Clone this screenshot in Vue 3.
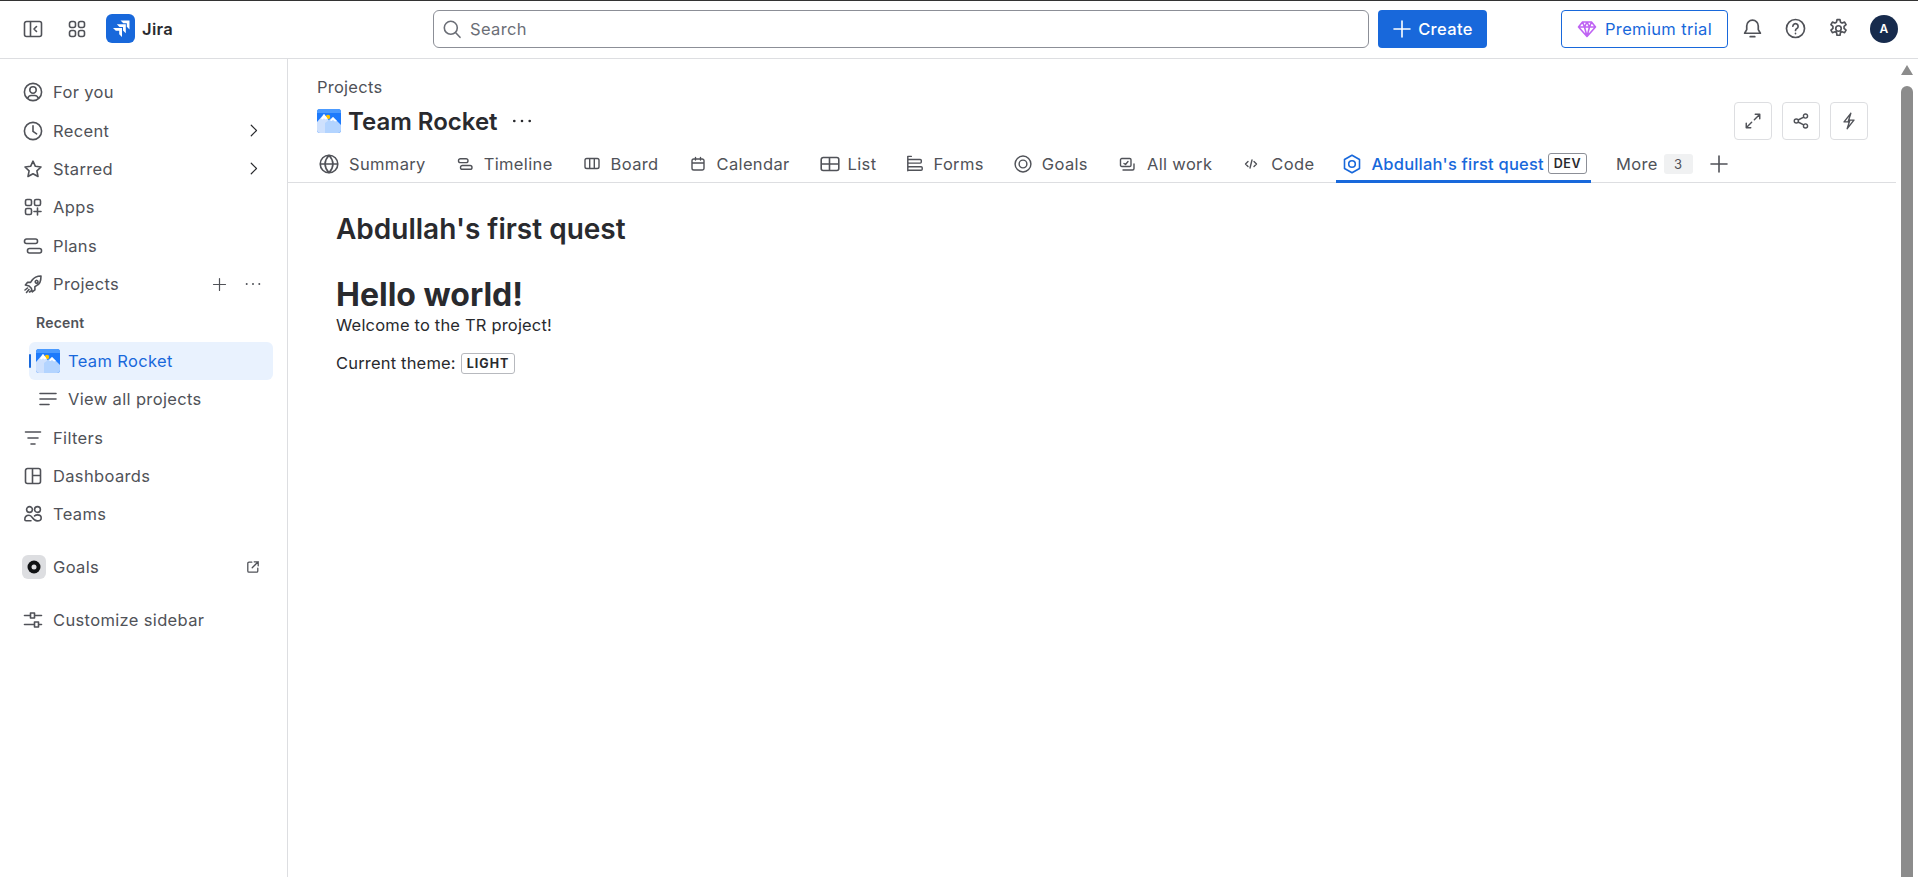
<script setup>
const r = (x, y, w, h, c = 1.5) =>
  `M${x + c} ${y}h${w - 2 * c}a${c} ${c} 0 0 1 ${c} ${c}v${h - 2 * c}a${c} ${c} 0 0 1-${c} ${c}h-${w - 2 * c}a${c} ${c} 0 0 1-${c}-${c}v-${h - 2 * c}a${c} ${c} 0 0 1 ${c}-${c}Z`
const ci = (x, y, q) => `M${x - q} ${y}a${q} ${q} 0 1 1 ${2 * q} 0a${q} ${q} 0 1 1-${2 * q} 0Z`

const icons = {
  foryou: ci(10, 10, 8.6) + ci(10, 8, 3.2) + 'M4.8 16.4c.4-1.9 1.7-2.9 3.4-2.9h3.6c1.7 0 3 1 3.4 2.9',
  recent: ci(10, 10, 8.6) + 'M10 4.8v5.6l3.6 2.4',
  star: 'M10 2.2l2.4 5.1 5.6.7-4.1 3.9 1.1 5.6-5-2.8-5 2.8 1.1-5.6L2 8l5.6-.7Z',
  apps: r(2.5, 2.5, 6, 6) + r(11.5, 2.5, 6, 6) + r(2.5, 11.5, 6, 6) + 'M14.5 11v7M11 14.5h7',
  plans: r(1.5, 3, 13, 4.5, 2) + r(4.5, 12.5, 14, 4.5, 2),
  rocket: 'M18 2c-4 .1-7 1.4-9 4.3L7.6 8.4H4.4L2.4 11l3.7 1 2.2 2.3 1 3.6 2.6-2v-3.2l2-1.4C16.800 10.200 18 6.500 18 2Z M12.200 7.800a1.400 1.400 0 1 0 0-.01Z M4.500 14l-2.500 2M6 15.500l-2.500 3M8 17l-1.500 1',
  filters: 'M2.500 4h15M5 10h10M8 16h4',
  dash: r(2.500, 2.500, 15, 15, 2) + 'M9.500 2.500v15M9.500 9.500h8',
  teams: ci(6.500, 5.500, 2.900) + ci(14.500, 5.500, 2.900) + 'M1.800 15.500c0-2.700 1.900-4.300 4.200-4.300 3.700 0 3.400 5.700 8.200 5.700 2.300 0 4-1.300 4-3 0-1.900-1.600-3-3.700-3-1.100 0-2.100.3-2.900 1M1.800 15.500c0 .9.400 1.300 1.200 1.300h5',
  custom: 'M1.500 5.500h6M12 5.500h6.500M7.500 3h4v5h-4ZM1.500 14.500h10M15.500 14.500h3M11.500 12h4v5h-4Z',
  external: 'M8.500 4H5a1.500 1.500 0 0 0-1.500 1.500V15A1.500 1.500 0 0 0 5 16.500h9.500A1.500 1.500 0 0 0 16 15v-3.500M9 11l7.500-7.500M11.500 3.500h5v5',
  allprojects: 'M2 4.500h16M2 10h16M2 15.500h9',
  sidebar: r(1.5, 2.5, 17, 15, 2) + 'M7.500 2.500v15M13.500 7.500 11 10l2.500 2.500',
  grid: r(2.500, 2.500, 6, 6, 2) + r(11.500, 2.500, 6, 6, 2) + r(2.500, 11.500, 6, 6, 2) + r(11.500, 11.500, 6, 6, 2),
  search: ci(8.800, 8.800, 6.500) + 'M13.500 13.500l4.500 4.800',
  chev: 'M7 3 14 10 7 17',
  plus: 'M10 2v16M2 10h16',
  dots: 'M3 10h.01M10 10h.01M17 10h.01',
  bell: 'M10 2a5.500 5.500 0 0 0-5.500 5.500V11L2.500 14.500h15L15.500 11V7.500A5.500 5.500 0 0 0 10 2ZM7.800 17.800h4.400',
  help: ci(10, 10, 8.600) + 'M7.500 7.800a2.500 2.500 0 1 1 3.800 2.200c-.9.500-1.300 1-1.300 1.900M10 14.500v.3',
  gear: ci(10, 10, 2.600) + 'M8.600 1.500h2.800l.5 2.500 1.500.8 2.400-.9 1.400 2.400-1.900 1.700v1.900l1.900 1.700-1.400 2.400-2.400-.9-1.500.8-.5 2.500H8.600l-.5-2.500-1.500-.8-2.400.9-1.400-2.400 1.900-1.700V8L2.800 6.300l1.400-2.400 2.400.9 1.500-.8Z',
  expand: 'M11.500 8.500 17.500 2.500M12.500 2.500h5v5M8.500 11.500l-6 6M2.500 12.500v5h5',
  share: ci(15, 4.500, 2.300) + ci(4.800, 10, 2.300) + ci(15, 15.500, 2.300) + 'M6.800 8.900l6.200-3.300M6.800 11.100l6.200 3.300',
  bolt: 'M12 1.500 4.500 11H9M8 18.500 15.500 9H11M12 1.500 9 11M8 18.500 11 9',
  globe: ci(10, 10, 8.800) + 'M1.200 10h17.600M10 1.200c-5 5.500-5 12 0 17.600M10 1.200c5 5.500 5 12 0 17.600',
  ring: ci(10, 10, 8.800) + ci(10, 10, 4.300),
  table: r(1.200, 3.500, 17.600, 13, 2) + 'M1.200 10h17.600M9.500 3.500v13',
  forms: 'M2 1.500h4M2 1.500v16' + r(2, 5, 15, 4, 1.200) + r(2, 13, 16, 4, 1.200),
  hex: 'M10 1.200 17.500 5.500v9L10 18.800 2.500 14.500v-9Z' + ci(10, 10, 3.300),
  timeline: r(2.500, 3.800, 9.500, 3.800, 1.900) + r(4.500, 10.500, 11.500, 3.800, 1.900),
  board: r(2, 3.500, 14, 10, 1.800) + 'M6.700 3.500v10M11.300 3.500v10',
  calendar: r(3, 4, 12, 11, 1.800) + 'M3 8h12M6.500 2.500V5M11.500 2.500V5',
  allwork: r(2.500, 3.500, 10.500, 8, 1.300) + 'M5 15h9.500a1.500 1.500 0 0 0 1.500-1.500V9M6 8.500l1.500 1 2.500-3',
  code: 'M6 6.500 3.500 9 6 11.500M12 6.500 14.500 9 12 11.500M10 5 8 13',
}

const topNav = [
  { label: 'For you', icon: 'foryou' },
  { label: 'Recent', icon: 'recent', chev: true },
  { label: 'Starred', icon: 'star', chev: true },
  { label: 'Apps', icon: 'apps' },
  { label: 'Plans', icon: 'plans' },
]
const midNav = [
  { label: 'Filters', icon: 'filters' },
  { label: 'Dashboards', icon: 'dash' },
  { label: 'Teams', icon: 'teams' },
]
const tabs = [
  { label: 'Summary', icon: 'globe' },
  { label: 'Timeline', icon: 'timeline', small: true },
  { label: 'Board', icon: 'board', small: true },
  { label: 'Calendar', icon: 'calendar', small: true },
  { label: 'List', icon: 'table', cls: 'tab-list' },
  { label: 'Forms', icon: 'forms', cls: 'tab-forms' },
  { label: 'Goals', icon: 'ring', cls: 'tab-goals' },
  { label: 'All work', icon: 'allwork', small: true, cls: 'tab-wide' },
  { label: 'Code', icon: 'code', small: true, cls: 'tab-wide' },
]
</script>

<template>
  <div class="page">
    <header class="topbar">
      <div class="top-left">
        <svg class="ic" viewBox="0 0 20 20"><path :d="icons.sidebar" /></svg>
        <svg class="ic grid" viewBox="0 0 20 20"><path :d="icons.grid" /></svg>
        <svg class="jira-logo" viewBox="0 0 29 29">
          <rect width="29" height="29" rx="6" fill="#1868DB" />
          <path d="M14.500 6.500h9v9l-2.700-2.700V9.300h-3.500Z M10.800 10.300h9v9L17 16.500v-3.400h-3.500Z M7 14h9v9l-2.800-2.800v-3.400H9.800Z" />
        </svg>
        <span class="jira-name">Jira</span>
      </div>
      <div class="search">
        <svg class="ic" viewBox="0 0 20 20"><path :d="icons.search" /></svg>
        <span>Search</span>
      </div>
      <button class="create">
        <svg class="plus-ic" viewBox="0 0 20 20"><path :d="icons.plus" /></svg>
        Create
      </button>
      <button class="premium">
        <svg class="diamond" viewBox="0 0 20 20">
          <path d="M5.500 3h9L18.500 8 10 17.500 1.500 8ZM1.500 8h17M7.500 8 10 17.500 12.500 8M5.500 3 7.500 8 10 3l2.500 5 2-5" />
        </svg>
        Premium trial
      </button>
      <div class="top-icons">
        <svg class="ic" viewBox="0 0 20 20"><path :d="icons.bell" /></svg>
        <svg class="ic" viewBox="0 0 20 20"><path :d="icons.help" /></svg>
        <svg class="ic" viewBox="0 0 20 20"><path :d="icons.gear" /></svg>
        <span class="avatar">A</span>
      </div>
    </header>

    <div class="body">
      <nav class="sidebar">
        <div v-for="n in topNav" :key="n.label" class="row">
          <svg class="ic" viewBox="0 0 20 20"><path :d="icons[n.icon]" /></svg>
          <span class="row-label">{{ n.label }}</span>
          <svg v-if="n.chev" class="chev" viewBox="0 0 20 20"><path :d="icons.chev" /></svg>
        </div>
        <div class="row">
          <svg class="ic" viewBox="0 0 20 20"><path :d="icons.rocket" /></svg>
          <span class="row-label">Projects</span>
          <svg class="mini plus-mini" viewBox="0 0 20 20"><path :d="icons.plus" /></svg>
          <svg class="mini dots" viewBox="0 0 20 20"><path :d="icons.dots" /></svg>
        </div>
        <div class="row sub-head">Recent</div>
        <div class="row sub active">
          <span class="indicator"></span>
          <svg class="mountain" viewBox="0 0 24 24">
            <defs><clipPath id="mclip"><rect width="24" height="24" rx="3" /></clipPath></defs>
            <g clip-path="url(#mclip)">
              <rect width="24" height="24" fill="#1D7AFC" />
              <rect width="24" height="4" fill="#4C9BFF" />
              <circle cx="11" cy="8" r="2.200" fill="#FFC400" />
              <path class="m-a" d="M0 24V13L7 5l6 8v11Z" />
              <path class="m-w" d="M4 9.500 7 5l3.500 4.500-2 1-1.500-1.200-1.500 1.200Z" />
              <path class="m-b" d="M8 24V14l8-6 8 8v8Z" />
              <path class="m-w" d="M13 11.500 16 8l4 4-2 .5-2-1.500-1.500 1Z" />
            </g>
          </svg>
          <span class="row-label">Team Rocket</span>
        </div>
        <div class="row sub">
          <svg class="ic list-ic" viewBox="0 0 20 20"><path :d="icons.allprojects" /></svg>
          <span class="row-label">View all projects</span>
        </div>
        <div v-for="n in midNav" :key="n.label" class="row">
          <svg class="ic" viewBox="0 0 20 20"><path :d="icons[n.icon]" /></svg>
          <span class="row-label">{{ n.label }}</span>
        </div>
        <div class="row spaced goals-row">
          <span class="goals-box">
            <svg viewBox="0 0 14 14" class="goals-mark">
              <circle cx="7" cy="7" r="6.500" fill="#101214" />
              <circle cx="7" cy="7" r="2.500" fill="#DDDEE1" />
            </svg>
          </span>
          <span class="row-label">Goals</span>
          <svg class="ext" viewBox="0 0 20 20"><path :d="icons.external" /></svg>
        </div>
        <div class="row spaced">
          <svg class="ic" viewBox="0 0 20 20"><path :d="icons.custom" /></svg>
          <span class="row-label">Customize sidebar</span>
        </div>
      </nav>

      <main class="main">
        <div class="main-col">
          <div class="proj-head">
            <div class="head-left">
              <div class="crumb">Projects</div>
              <div class="proj-title">
                <svg class="mountain" viewBox="0 0 24 24">
                  <g clip-path="url(#mclip)">
                    <rect width="24" height="24" fill="#1D7AFC" />
                    <rect width="24" height="4" fill="#4C9BFF" />
                    <circle cx="11" cy="8" r="2.200" fill="#FFC400" />
                    <path class="m-a" d="M0 24V13L7 5l6 8v11Z" />
                    <path class="m-w" d="M4 9.500 7 5l3.500 4.500-2 1-1.500-1.200-1.500 1.200Z" />
                    <path class="m-b" d="M8 24V14l8-6 8 8v8Z" />
                    <path class="m-w" d="M13 11.500 16 8l4 4-2 .5-2-1.500-1.500 1Z" />
                  </g>
                </svg>
                <h1>Team Rocket</h1>
                <svg class="title-dots" viewBox="0 0 20 20"><path :d="icons.dots" /></svg>
              </div>
            </div>
            <div class="actions">
              <button class="act"><svg class="act-ic" viewBox="0 0 20 20"><path :d="icons.expand" /></svg></button>
              <button class="act"><svg class="act-ic" viewBox="0 0 20 20"><path :d="icons.share" /></svg></button>
              <button class="act"><svg class="act-ic" viewBox="0 0 20 20"><path :d="icons.bolt" /></svg></button>
            </div>
          </div>

          <div class="tabs">
            <div v-for="t in tabs" :key="t.label" class="tab" :class="t.cls">
              <svg v-if="t.small" class="tab-small" viewBox="0 0 18 18"><path :d="icons[t.icon]" /></svg>
              <svg v-else class="ic tab-big" viewBox="0 0 20 20"><path :d="icons[t.icon]" /></svg>
              <span>{{ t.label }}</span>
            </div>
            <div class="tab tab-active">
              <svg class="ic tab-big" viewBox="0 0 20 20"><path :d="icons.hex" /></svg>
              <span>Abdullah's first quest</span>
              <span class="dev">DEV</span>
            </div>
            <div class="tab tab-more">
              <span>More</span>
              <span class="count">3</span>
            </div>
            <svg class="tab-plus" viewBox="0 0 20 20"><path :d="icons.plus" /></svg>
          </div>

          <section class="content">
            <h2>Abdullah's first quest</h2>
            <h3>Hello world!</h3>
            <p class="welcome">Welcome to the TR project!</p>
            <p class="theme">Current theme: <span class="kbd">LIGHT</span></p>
          </section>
        </div>
        <aside class="scrollbar">
          <span class="arrow"></span>
          <span class="thumb"></span>
        </aside>
      </main>
    </div>
  </div>
</template>

<style>
html, body { margin: 0; background: #fff; overflow: hidden; }
</style>

<style scoped>
* { box-sizing: border-box; }
.page {
  width: 1918px;
  height: 877px;
  display: flex;
  flex-direction: column;
  overflow: hidden;
  font-family: Inter, "Liberation Sans", sans-serif;
  font-size: 16.5px;
  letter-spacing: .35px;
  color: #505258;
  background: #fff;
}
svg path { fill: none; stroke: currentColor; stroke-width: 1.6; stroke-linecap: round; stroke-linejoin: round; }
.ic { width: 20px; height: 20px; flex: none; }

.topbar {
  height: 59px;
  flex: none;
  display: flex;
  align-items: center;
  border-top: 1px solid #333;
  border-bottom: 1px solid #DDDEE1;
  padding: 0 0 2px 23px;
}
.top-left { display: flex; align-items: center; width: 410px; }
.grid { margin-left: 24px; }
.jira-logo { width: 29px; height: 29px; margin-left: 19px; flex: none; }
.jira-logo path { stroke: none; fill: #fff; }
.jira-name { margin-left: 7px; font-weight: 600; color: #292A2E; }
.search {
  width: 936px;
  height: 38px;
  border: 1px solid #8C8F97;
  border-radius: 6px;
  display: flex;
  align-items: center;
  gap: 8px;
  padding-left: 8px;
  color: #6B6E76;
}
button { font-family: inherit; font-size: inherit; letter-spacing: inherit; cursor: pointer; }
.create {
  width: 109px;
  height: 38px;
  margin-left: 9px;
  border: 0;
  border-radius: 4px;
  background: #1868DB;
  color: #fff;
  font-weight: 500;
  display: flex;
  align-items: center;
  justify-content: center;
  gap: 6px;
  padding: 0;
}
.plus-ic { width: 20px; height: 20px; }
.premium {
  width: 167px;
  height: 38px;
  margin-left: 74px;
  border: 1px solid #1868DB;
  border-radius: 4px;
  background: #fff;
  color: #1868DB;
  display: flex;
  align-items: center;
  justify-content: center;
  gap: 8px;
  padding: 0;
}
.diamond { width: 20px; height: 20px; color: #BF63F3; }
.top-icons { display: flex; align-items: center; margin-left: 14px; gap: 22px; }
.top-icons .ic { width: 21px; height: 21px; }
.avatar {
  width: 28px;
  height: 28px;
  margin-left: -1px;
  border-radius: 50%;
  background: #172B4D;
  color: #fff;
  font-size: 12px;
  font-weight: 600;
  display: flex;
  align-items: center;
  justify-content: center;
}

.body { flex: 1; display: flex; min-height: 0; }
.sidebar {
  width: 288px;
  flex: none;
  border-right: 1px solid #DDDEE1;
  padding-top: 14px;
}
.row {
  height: 38.4px;
  display: flex;
  align-items: center;
  padding-left: 23px;
  gap: 10px;
  position: relative;
}
.row-label { white-space: nowrap; }
.chev { width: 15px; height: 15px; margin-left: auto; margin-right: 26px; color: #292A2E; }
.mini { width: 14px; height: 14px; }
.plus-mini { width: 15px; height: 15px; margin-left: auto; margin-right: 7px; }
.dots { width: 18px; height: 18px; margin-right: 25px; }
.dots path { stroke-width: 2.200; }
.sub-head {
  padding-left: 36px;
  font-size: 14px;
  font-weight: 600;
  letter-spacing: .2px;
}
.sub {
  margin-left: 29px;
  width: 244px;
  padding-left: 7px;
  gap: 8px;
  border-radius: 6px;
}
.active { background: #E9F2FE; color: #1868DB; }
.indicator {
  position: absolute;
  left: 0;
  top: 12px;
  width: 2px;
  height: 14px;
  background: #1868DB;
  border-radius: 1px;
}
.mountain { width: 24px; height: 24px; flex: none; }
.mountain path { stroke: none; }
.mountain .m-a { fill: #CFE1FD; }
.mountain .m-b { fill: #B3D4FF; }
.mountain .m-w { fill: #fff; }
.list-ic { margin-left: 2px; margin-right: 2px; width: 20px; }
.spaced { margin-top: 14.500px; }
.goals-row { padding-left: 22px; gap: 7px; }
.goals-box {
  width: 24px;
  height: 24px;
  border-radius: 6px;
  background: #DDDEE1;
  display: flex;
  align-items: center;
  justify-content: center;
}
.goals-mark { width: 14px; height: 14px; }
.ext { width: 16px; height: 16px; margin-left: auto; margin-right: 26px; }

.main { flex: 1; display: flex; min-width: 0; }
.main-col { flex: 1; min-width: 0; }
.proj-head {
  height: 108px;
  margin-bottom: -17px;
  display: flex;
  justify-content: space-between;
  padding: 15px 28px 0 29px;
}
.crumb { line-height: 26px; letter-spacing: .25px; }
.proj-title { display: flex; align-items: center; height: 36px; margin-top: 3px; }
.proj-title h1 {
  margin: 0 0 0 7px;
  font-size: 24px;
  font-weight: 600;
  letter-spacing: 0;
  color: #292A2E;
}
.title-dots { width: 22px; height: 22px; margin-left: 13px; color: #292A2E; }
.title-dots path { stroke-width: 2.400; }
.actions { display: flex; gap: 10px; padding-top: 28px; }
.act {
  width: 38px;
  height: 38px;
  background: #fff;
  border: 1px solid #DDDEE1;
  border-radius: 4px;
  color: #505258;
  display: flex;
  align-items: center;
  justify-content: center;
  padding: 0;
}
.act-ic { width: 18px; height: 18px; }
.tabs {
  height: 33px;
  display: flex;
  align-items: flex-start;
  padding-left: 25px;
  gap: 18px;
  border-bottom: 1px solid #DDDEE1;
  white-space: nowrap;
}
.tab {
  height: 33px;
  display: flex;
  align-items: center;
  gap: 10px;
  padding: 0 6px 6px;
}
.tab-big { width: 20px; height: 20px; }
.tab-small { width: 18px; height: 18px; flex: none; }
.tab-small path { stroke-width: 1.400; }
.tab-list { gap: 8px; }
.tab-forms { gap: 9px; }
.tab-forms .tab-big { width: 18px; height: 18px; }
.tab-goals .tab-big { width: 18px; height: 18px; }
.tab-wide { gap: 11px; }
.tab-active {
  color: #1868DB;
  font-weight: 500;
  letter-spacing: .2px;
  border-bottom: 3px solid #1868DB;
  padding: 0 4px 3px 6px;
  margin-left: -2px;
  gap: 9px;
}
.dev {
  margin-left: -5px;
  border: 1px solid #8C8F97;
  border-radius: 3px;
  color: #292A2E;
  font-size: 12.500px;
  font-weight: 600;
  letter-spacing: .5px;
  padding: 0 5px;
  line-height: 19px;
}
.tab-more { gap: 6px; padding-left: 7px; padding-right: 0; }
.count {
  font-size: 13px;
  background: #F0F1F2;
  border-radius: 3px;
  width: 29px;
  line-height: 20px;
  text-align: center;
}
.tab-plus { width: 20px; height: 20px; margin: 4px 0 0 -2px; color: #505258; flex: none; }
.content { padding: 30px 0 0 48px; color: #292A2E; }
.content h2 { margin: 0; font-size: 28px; line-height: 32px; font-weight: 600; letter-spacing: 0; }
.content h3 { margin: 31px 0 0; font-size: 32px; line-height: 37px; font-weight: 700; letter-spacing: 0; }
.content p { margin: 0; letter-spacing: .18px; }
.welcome { line-height: 24px; }
.theme { margin-top: 14px !important; line-height: 24px; display: flex; align-items: center; gap: 5px; }
.kbd {
  border: 1px solid #B7B9BE;
  border-radius: 3px;
  font-size: 12.500px;
  font-weight: 700;
  letter-spacing: 1px;
  line-height: 19px;
  padding: 0 5px;
}
.scrollbar {
  width: 22px;
  flex: none;
  display: flex;
  flex-direction: column;
  align-items: center;
  padding-top: 6px;
}
.arrow {
  width: 0;
  height: 0;
  border-left: 6px solid transparent;
  border-right: 6px solid transparent;
  border-bottom: 10px solid #8C8C8C;
}
.thumb {
  margin-top: 11px;
  width: 12px;
  flex: 1;
  background: #8C8C8C;
  border-radius: 6px 6px 0 0;
}
</style>
